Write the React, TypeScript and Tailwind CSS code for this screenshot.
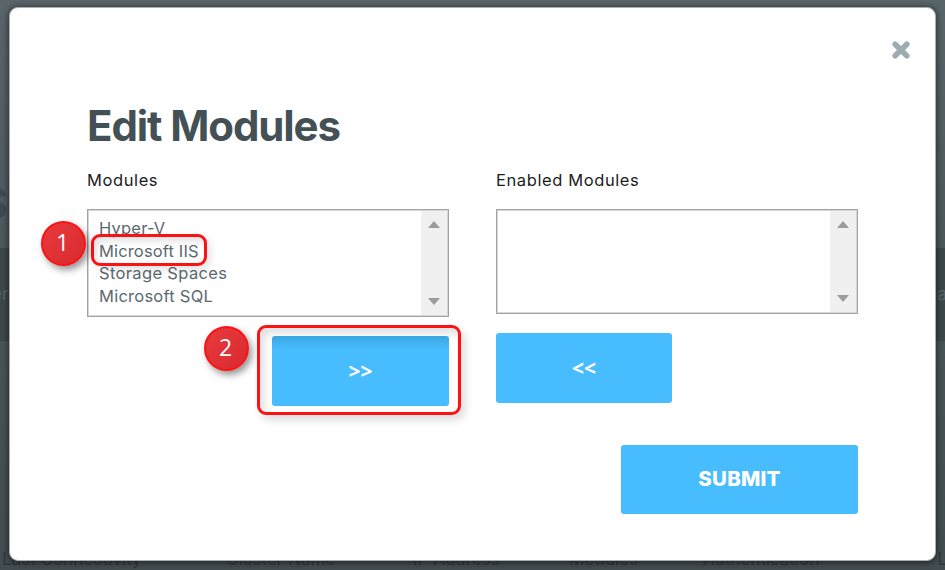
import type { ReactNode } from 'react';

function ScrollRail() {
  return (
    <div className="flex w-[26px] shrink-0 flex-col items-center justify-between bg-[#f0f0f0] pt-[10px] pb-[10px]">
      <svg width="12" height="7" viewBox="0 0 12 7" className="fill-[#9c9c9c]">
        <path d="M6 0L12 7H0z" />
      </svg>
      <svg width="12" height="7" viewBox="0 0 12 7" className="fill-[#9c9c9c]">
        <path d="M0 0H12L6 7z" />
      </svg>
    </div>
  );
}

function Badge({ className, children }: { className: string; children: ReactNode }) {
  return (
    <div
      className={`absolute flex size-[45px] items-center justify-center rounded-full border-2 border-[#fb1215] bg-linear-to-br from-[#e8393d] to-[#d92b2f] pr-[2px] pb-[2px] font-['Open_Sans',sans-serif] text-[23px] leading-none text-white shadow-[3px_4px_7px_rgba(0,0,0,0.42)] ${className}`}
    >
      {children}
    </div>
  );
}

const modules = [
  { name: 'Hyper-V', tracking: 'tracking-[0.2px]' },
  { name: 'Microsoft IIS', tracking: 'tracking-[0.15px]' },
  { name: 'Storage Spaces', tracking: 'tracking-[0.35px]' },
  { name: 'Microsoft SQL', tracking: 'tracking-[0.25px]' },
];

function Backdrop() {
  return (
    <div className="absolute inset-0 flex flex-col overflow-hidden bg-linear-to-b from-[#59656a] via-[#4b565a] to-[#434d51]">
      <div className="h-[248px] shrink-0 pt-[178px] text-[44px] leading-[50px] font-bold text-[#3e4a4f]">
        <span className="-ml-[21px]">S</span>
      </div>
      <div className="flex h-[93px] shrink-0 items-center justify-between bg-[#3e484b] text-[17px] text-[#59656a]">
        <span className="-ml-[8px]">er</span>
        <span className="-mr-[2px]">a</span>
      </div>
      <div className="mt-[206px] flex h-[23px] shrink-0 text-[17px] leading-[24px] whitespace-nowrap text-[#30393d]">
        <span className="w-[226px] pl-[2px]">Last Connectivity</span>
        <span className="w-[187px]">Cluster Name</span>
        <span className="w-[156px]">IP Address</span>
        <span className="w-[134px]">Modules</span>
        <span>Authentication</span>
        <span className="mr-[-2px] ml-auto">L</span>
      </div>
    </div>
  );
}

export default function App() {
  return (
    <div className="relative h-[570px] w-[945px] overflow-hidden font-['Inter',sans-serif]">
      <Backdrop />
      <div className="relative px-[9px] pt-[7px]">
        <div className="h-[554px] w-[927px] rounded-[9px] border border-[#a9aeaf] bg-white px-[77px] pt-[92px] shadow-[0_1px_6px_1px_rgba(0,0,0,0.5)]">
          <h1 className="h-[52px] text-[42px] leading-[52px] font-bold tracking-[-1.1px] whitespace-nowrap text-[#435157]">
            Edit Modules
          </h1>
          <div className="mt-[17px] flex gap-[47px]">
            <section className="flex w-[362px] flex-col">
              <label className="-mt-px h-[24px] text-[16.5px] leading-[24px] tracking-[0.6px] text-[#1c1c1c]">Modules</label>
              <div className="mt-[17px] flex h-[108px] border border-[#a3a3a3] bg-white p-px inset-ring inset-ring-[#d6d6d6]">
                <ul className="flex-1 pt-[6px] pl-[10px] text-[16.5px] leading-[22.7px] text-[#5c696f]">
                  {modules.map((m) => (
                    <li key={m.name} className={m.tracking}>
                      {m.name}
                    </li>
                  ))}
                </ul>
                <ScrollRail />
              </div>
              <button className="mt-[19px] ml-auto h-[70px] w-[177px] rounded-[3px] bg-linear-to-b from-[#3ca9e4] to-[#47bcff] to-20% pt-[1px] font-['Open_Sans',sans-serif] text-[21px] font-bold text-white">
                &gt;&gt;
              </button>
            </section>
            <section className="flex w-[362px] flex-col">
              <label className="-mt-px h-[24px] text-[16.5px] leading-[24px] tracking-[0.6px] text-[#1c1c1c]">Enabled Modules</label>
              <div className="mt-[17px] flex h-[105px] border border-[#a3a3a3] bg-white p-px inset-ring inset-ring-[#d6d6d6]">
                <div className="flex-1" />
                <ScrollRail />
              </div>
              <button className="mt-[19px] h-[70px] w-[176px] rounded-[3px] bg-[#47bcff] pt-[1px] font-['Open_Sans',sans-serif] text-[21px] font-bold text-white">
                &lt;&lt;
              </button>
            </section>
          </div>
          <div className="mt-[39px] flex w-[771px] justify-end">
            <button className="h-[69px] w-[237px] rounded-[3px] bg-[#47bcff] text-[20.5px] font-extrabold tracking-[0.2px] text-white">
              SUBMIT
            </button>
          </div>
        </div>
      </div>
      <svg className="absolute top-[40px] left-[891px]" width="20" height="20" viewBox="0 0 20 20" fill="none">
        <path d="M4.2 4.2L15.8 15.8M15.8 4.2L4.2 15.8" stroke="#9eabb1" strokeWidth="5.6" strokeLinecap="round" />
      </svg>
      <div className="absolute top-[234px] left-[91px] h-[32px] w-[116px] rounded-[9px] border-3 border-[#fb1215] shadow-[3px_4px_8px_rgba(0,0,0,0.12),inset_3px_4px_7px_rgba(0,0,0,0.12)]" />
      <div className="absolute top-[325px] left-[257px] h-[90px] w-[204px] rounded-[9px] border-3 border-[#fb1215] shadow-[4px_5px_9px_rgba(0,0,0,0.14),inset_4px_5px_8px_rgba(0,0,0,0.13)]" />
      <Badge className="top-[221px] left-[41px]">1</Badge>
      <Badge className="top-[326px] left-[204px]">2</Badge>
    </div>
  );
}
